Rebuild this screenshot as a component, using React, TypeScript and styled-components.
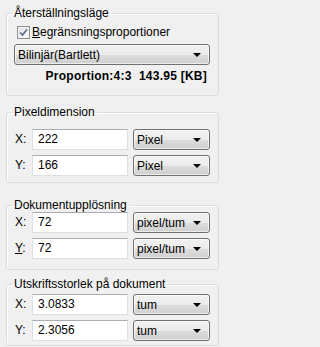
import React from 'react';
import styled, { createGlobalStyle } from 'styled-components';

const GlobalStyle = createGlobalStyle`
	html, body {
		margin: 0;
		padding: 0;
		background: #f0f0f0;
	}
	body {
		font-family: 'Liberation Sans', Arial, sans-serif;
		font-size: 12px;
		color: #000000;
	}
`;

const PanelUI = styled.div`
	display: flex;
	flex-direction: column;
	width: 226px;
	height: 347px;
	padding: 7px 0 0 6px;
	box-sizing: border-box;
	overflow: hidden;
`;

const GroupUI = styled.fieldset<{ $top: number; $bottom: number; $gap?: number }>`
	width: 213px;
	margin: ${(p) => p.$gap ?? 0}px 0 0 0;
	padding: ${(p) => p.$top}px 0 ${(p) => p.$bottom}px 0;
	box-sizing: border-box;
	border: 1px solid #d5dfe5;
	border-radius: 3px;
	box-shadow: inset 1px 1px 0 #ffffff;
	min-width: 0;
`;

const LegendUI = styled.legend`
	margin-left: 5px;
	padding: 0 2px;
	line-height: 13px;
	font-size: 12px;
`;

const CheckRowUI = styled.label`
	display: flex;
	align-items: center;
	gap: 2px;
	margin: 0 0 0 10px;
	height: 13px;
	line-height: 13px;
`;

const CheckBoxUI = styled.span`
	display: flex;
	align-items: center;
	justify-content: center;
	width: 13px;
	height: 13px;
	box-sizing: border-box;
	border: 1px solid #8e8f8f;
	background: linear-gradient(135deg, #dcdcdc 0%, #f6f6f6 70%, #ffffff 100%);
	box-shadow: inset 0 0 0 1px #f4f4f4;
`;

const UnderlineUI = styled.u`
	text-decoration: underline;
	text-underline-offset: 1px;
`;

const ComboUI = styled.div<{ $width: number }>`
	display: flex;
	align-items: center;
	justify-content: space-between;
	width: ${(p) => p.$width}px;
	height: 21px;
	padding: 0 8px 0 3px;
	box-sizing: border-box;
	border: 1px solid #707070;
	border-radius: 3px;
	background: linear-gradient(to bottom, #f2f2f2 0%, #ebebeb 50%, #dddddd 51%, #cfcfcf 100%);
	box-shadow: inset 0 0 0 1px rgba(255, 255, 255, 0.6);
	white-space: nowrap;
`;

const ArrowUI = styled.span`
	width: 0;
	height: 0;
	border-left: 4px solid transparent;
	border-right: 4px solid transparent;
	border-top: 4px solid #000000;
`;

const WideComboUI = styled.div`
	margin: 5px 0 0 7px;
`;

const InfoUI = styled.div`
	margin: 5px 11px 0 0;
	text-align: right;
	font-weight: bold;
	letter-spacing: 0.25px;
	line-height: 13px;
	white-space: pre;
`;

const RowsUI = styled.div`
	display: flex;
	flex-direction: column;
	gap: 5px;
`;

const RowUI = styled.div`
	display: grid;
	grid-template-columns: 12px 96px 77px;
	column-gap: 5px;
	align-items: center;
	padding-left: 8px;
`;

const AxisUI = styled.span`
	line-height: 13px;
`;

const InputUI = styled.div`
	height: 21px;
	padding: 0 5px;
	box-sizing: border-box;
	border: 1px solid #dbdfe6;
	border-top-color: #abadb3;
	background: #ffffff;
	line-height: 19px;
`;

type Field = { axis: string; value: string; unit: string; underline?: boolean };

type Group = { title: string; top: number; bottom: number; gap: number; rows: Field[] };

const groups: Group[] = [
	{
		title: 'Pixeldimension',
		top: 10,
		bottom: 6,
		gap: 10,
		rows: [
			{ axis: 'X', value: '222', unit: 'Pixel' },
			{ axis: 'Y', value: '166', unit: 'Pixel' },
		],
	},
	{
		title: 'Dokumentupplösning',
		top: 0,
		bottom: 10,
		gap: 16,
		rows: [
			{ axis: 'X', value: '72', unit: 'pixel/tum' },
			{ axis: 'Y', value: '72', unit: 'pixel/tum', underline: true },
		],
	},
	{
		title: 'Utskriftsstorlek på dokument',
		top: 3,
		bottom: 4,
		gap: 8,
		rows: [
			{ axis: 'X', value: '3.0833', unit: 'tum' },
			{ axis: 'Y', value: '2.3056', unit: 'tum' },
		],
	},
];

const CheckMark = () => (
	<svg width='9' height='9' viewBox='0 0 9 9'>
		<path d='M1 4.5 L3.5 7 L8 1.5' fill='none' stroke='#566a8e' strokeWidth='1.6' />
	</svg>
);

const renderRow = (row: Field) => (
	<RowUI key={row.axis}>
		<AxisUI>{row.underline ? <UnderlineUI>{row.axis}</UnderlineUI> : row.axis}:</AxisUI>
		<InputUI>{row.value}</InputUI>
		<ComboUI $width={77}>
			<span>{row.unit}</span>
			<ArrowUI />
		</ComboUI>
	</RowUI>
);

const App = () => (
	<PanelUI>
		<GlobalStyle />
		<GroupUI $top={6} $bottom={12}>
			<LegendUI>Återställningsläge</LegendUI>
			<CheckRowUI>
				<CheckBoxUI>
					<CheckMark />
				</CheckBoxUI>
				<span>
					<UnderlineUI>B</UnderlineUI>egränsningsproportioner
				</span>
			</CheckRowUI>
			<WideComboUI>
				<ComboUI $width={196}>
					<span>Bilinjär(Bartlett)</span>
					<ArrowUI />
				</ComboUI>
			</WideComboUI>
			<InfoUI>{'Proportion:4:3  143.95 [KB]'}</InfoUI>
		</GroupUI>
		{groups.map((group) => (
			<GroupUI key={group.title} $top={group.top} $bottom={group.bottom} $gap={group.gap}>
				<LegendUI>{group.title}</LegendUI>
				<RowsUI>{group.rows.map(renderRow)}</RowsUI>
			</GroupUI>
		))}
	</PanelUI>
);

export default App;
